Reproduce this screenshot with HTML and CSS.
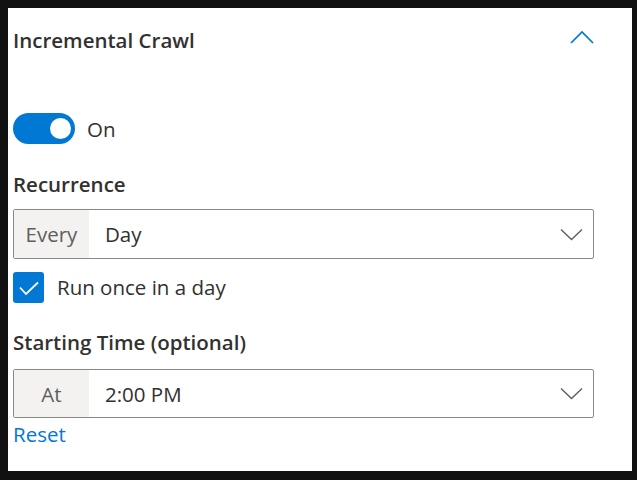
FILE: index.html
```html
<!DOCTYPE html>
<html lang="en">
<head>
<meta charset="utf-8">
<title>Incremental Crawl</title>
<link rel="stylesheet" href="styles.css">
</head>
<body>
<div class="panel">
  <div class="header">
    <div class="title">Incremental Crawl</div>
    <svg class="chev-up" width="24" height="14" viewBox="0 0 24 14"><path d="M1 13 L12 2 L23 13" fill="none" stroke="#0078d4" stroke-width="1.7"/></svg>
  </div>
  <div class="toggle-row">
    <div class="toggle"><span class="knob"></span></div>
    <span class="toggle-text">On</span>
  </div>
  <div class="label label-recurrence">Recurrence</div>
  <div class="dropdown dd-first">
    <div class="prefix">Every</div>
    <div class="value">Day</div>
    <svg class="chev-down" width="23" height="13" viewBox="0 0 23 13"><path d="M1 1.5 L11.5 11.5 L22 1.5" fill="none" stroke="#605e5c" stroke-width="1.4"/></svg>
  </div>
  <div class="check-row">
    <div class="checkbox"><svg width="31" height="31" viewBox="0 0 31 31"><path d="M7 15.5 L13 22 L25 10.5" fill="none" stroke="#ffffff" stroke-width="1.8"/></svg></div>
    <span class="check-text">Run once in a day</span>
  </div>
  <div class="label label-start">Starting Time (optional)</div>
  <div class="dropdown dd-second">
    <div class="prefix">At</div>
    <div class="value">2:00 PM</div>
    <svg class="chev-down" width="23" height="13" viewBox="0 0 23 13"><path d="M1 1.5 L11.5 11.5 L22 1.5" fill="none" stroke="#605e5c" stroke-width="1.4"/></svg>
  </div>
  <a class="reset" href="#">Reset</a>
</div>
</body>
</html>
```
FILE: styles.css
```css
* { box-sizing: border-box; }
html, body { margin: 0; }
body {
  width: 637px;
  height: 480px;
  background: #111111;
  padding: 8px 5px 9px 8px;
  font-family: "Open Sans", "Noto Sans", sans-serif;
  font-size: 20.5px;
  line-height: 28px;
  color: #323130;
}
.panel {
  background: #ffffff;
  height: 100%;
  padding: 18px 38px 0 5px;
  display: flex;
  flex-direction: column;
}
.header {
  display: flex;
  align-items: flex-start;
  height: 28px;
}
.title {
  flex: 1;
  font-weight: 600;
}
.chev-up {
  margin-top: 4px;
  display: block;
}
.toggle-row {
  margin-top: 59px;
  display: flex;
  align-items: center;
  height: 31px;
}
.toggle {
  width: 62px;
  height: 31px;
  border-radius: 16px;
  background: #0078d4;
  display: flex;
  align-items: center;
  justify-content: flex-end;
  padding-right: 4px;
}
.knob {
  width: 21px;
  height: 21px;
  border-radius: 50%;
  background: #ffffff;
}
.toggle-text {
  margin-left: 12px;
}
.label {
  font-weight: 600;
}
.label-recurrence { margin-top: 26px; }
.label-start { margin-top: 25px; }
.dropdown {
  display: flex;
  align-items: stretch;
  border: 1px solid #8a8886;
  border-radius: 2px;
}
.dd-first { margin-top: 11px; height: 50px; }
.dd-second { margin-top: 13px; height: 49px; }
.prefix {
  width: 75px;
  background: #f3f2f1;
  color: #605e5c;
  text-align: center;
  display: flex;
  align-items: center;
  justify-content: center;
}
.value {
  flex: 1;
  padding-left: 16px;
  display: flex;
  align-items: center;
}
.chev-down {
  align-self: center;
  margin-right: 10px;
  display: block;
}
.check-row {
  margin-top: 13px;
  display: flex;
  align-items: center;
  height: 31px;
}
.checkbox {
  width: 31px;
  height: 31px;
  border-radius: 3px;
  background: #0078d4;
}
.checkbox svg { display: block; }
.check-text {
  margin-left: 13px;
  margin-top: -2px;
}
.reset {
  margin-top: 2px;
  color: #0078d4;
  text-decoration: none;
  align-self: flex-start;
}
```
